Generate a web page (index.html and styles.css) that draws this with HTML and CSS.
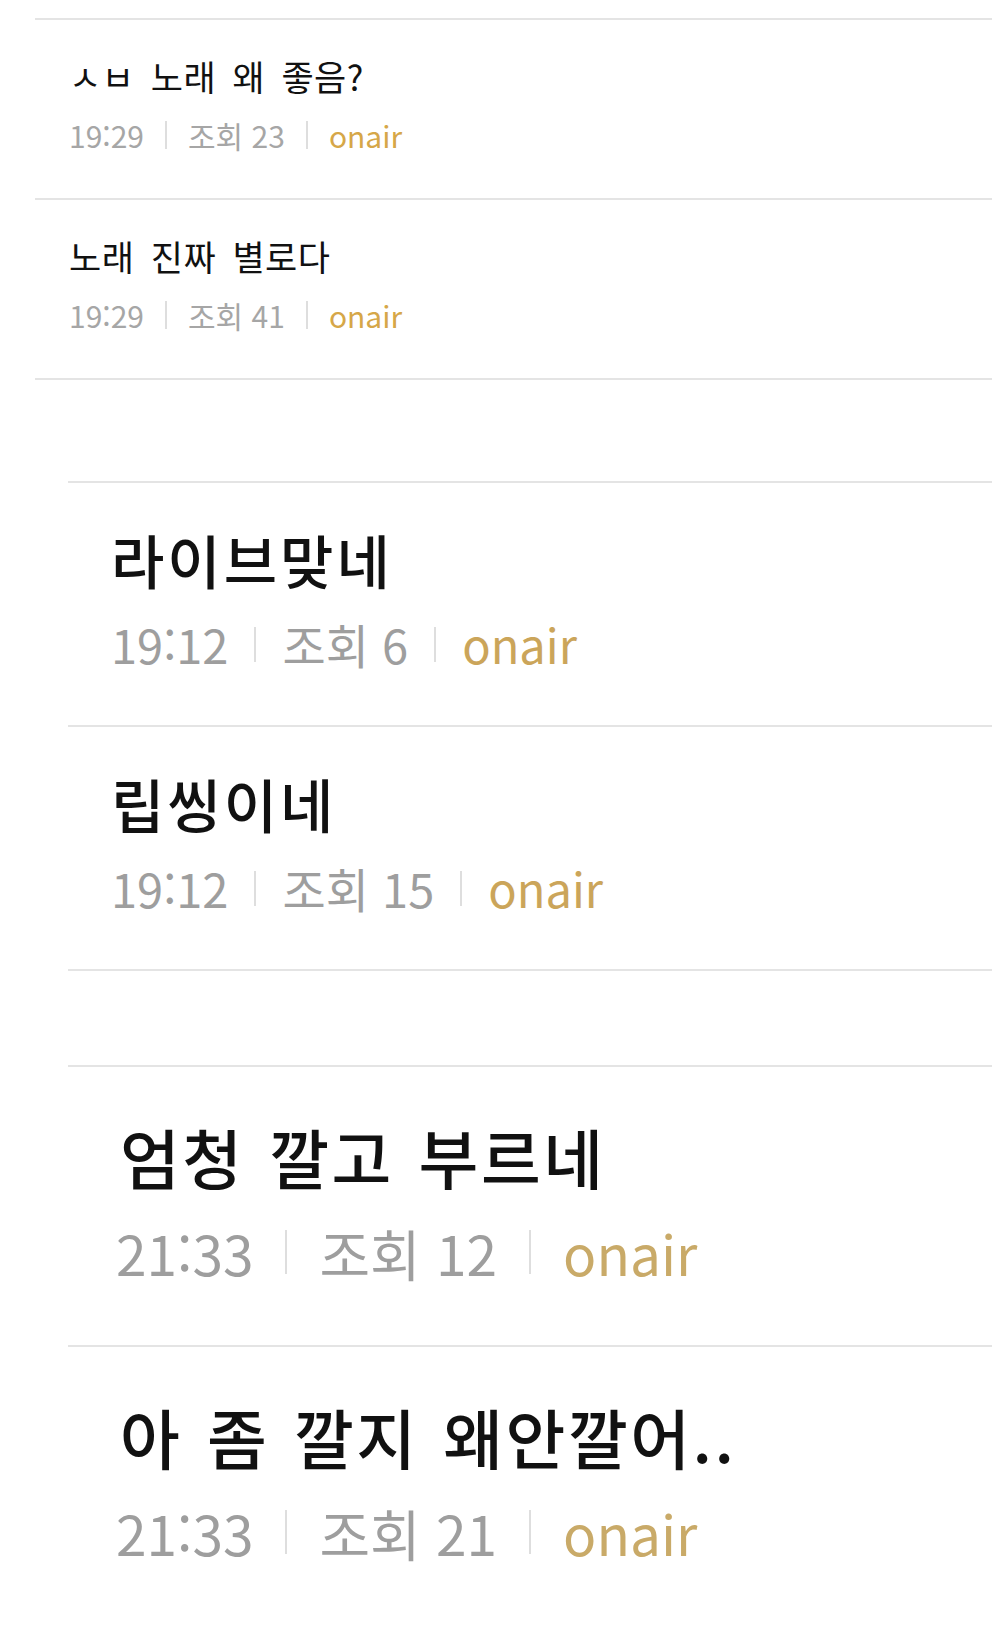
FILE: index.html
```html
<!DOCTYPE html>
<html lang="ko">
<head>
<meta charset="utf-8">
<title>게시판</title>
<link rel="stylesheet" href="styles.css">
</head>
<body>
<main class="page">
  <section class="board board--s1">
    <ul class="posts">
      <li class="post">
        <p class="post-title">ㅅㅂ 노래 왜 좋음?</p>
        <div class="post-meta"><span>19:29</span><i class="sep"></i><span>조회 23</span><i class="sep"></i><span class="onair">onair</span></div>
      </li>
      <li class="post">
        <p class="post-title">노래 진짜 별로다</p>
        <div class="post-meta"><span>19:29</span><i class="sep"></i><span>조회 41</span><i class="sep"></i><span class="onair">onair</span></div>
      </li>
    </ul>
  </section>

  <section class="board board--s2">
    <ul class="posts">
      <li class="post">
        <p class="post-title">라이브맞네</p>
        <div class="post-meta"><span>19:12</span><i class="sep"></i><span>조회 6</span><i class="sep"></i><span class="onair">onair</span></div>
      </li>
      <li class="post">
        <p class="post-title">립씽이네</p>
        <div class="post-meta"><span>19:12</span><i class="sep"></i><span>조회 15</span><i class="sep"></i><span class="onair">onair</span></div>
      </li>
    </ul>
  </section>

  <section class="board board--s3">
    <ul class="posts">
      <li class="post">
        <p class="post-title">엄청 깔고 부르네</p>
        <div class="post-meta"><span>21:33</span><i class="sep"></i><span>조회 12</span><i class="sep"></i><span class="onair">onair</span></div>
      </li>
      <li class="post">
        <p class="post-title">아 좀 깔지 왜안깔어..</p>
        <div class="post-meta"><span>21:33</span><i class="sep"></i><span>조회 21</span><i class="sep"></i><span class="onair">onair</span></div>
      </li>
    </ul>
  </section>
</main>
</body>
</html>
```

FILE: styles.css
```css
* { box-sizing: border-box; }

html, body {
  margin: 0;
  padding: 0;
  background: #ffffff;
}

body {
  font-family: "Noto Sans CJK KR", "Noto Sans", sans-serif;
  color: #111111;
}

.page {
  display: flex;
  flex-direction: column;
  width: 992px;
  min-height: 1643px;
  overflow: hidden;
}

.posts {
  list-style: none;
  margin: 0;
  padding: 0;
}

.post {
  border-top: 2px solid #e4e4e4;
  display: flex;
  flex-direction: column;
  align-items: flex-start;
}

.post-title {
  margin: 0;
  white-space: nowrap;
  color: #111111;
  font-weight: 500;
}

.post-meta {
  display: flex;
  align-items: center;
  white-space: nowrap;
  color: #9e9e9e;
}

.sep {
  display: block;
  width: 2px;
  background: #dedede;
}

.onair {
  color: #cba55a;
}

/* ---- first capture (small) ---- */
.board--s1 {
  margin-left: 35px;
  padding-top: 18px;
}
.board--s1 .posts {
  border-bottom: 2px solid #e4e4e4;
}
.board--s1 .post {
  height: 180px;
  padding: 35px 0 0 34px;
}
.board--s1 .post-title {
  font-size: 35px;
  line-height: 42px;
  font-weight: 400;
  word-spacing: 6px;
  letter-spacing: 0.5px;
}
.board--s1 .post-meta {
  margin-top: 18px;
  font-size: 30px;
  line-height: 40px;
  gap: 21px;
  color: #a6a6a6;
}
.board--s1 .sep {
  height: 28px;
}
.board--s1 .onair {
  color: #d6a748;
}

/* ---- second capture (medium) ---- */
.board--s2 {
  margin-left: 68px;
  margin-top: 101px;
}
.board--s2 .posts {
  border-bottom: 2px solid #e4e4e4;
}
.board--s2 .post {
  height: 244px;
  padding: 41px 0 0 43px;
}
.board--s2 .post-title {
  font-size: 58px;
  line-height: 70px;
  letter-spacing: 3px;
}
.board--s2 .post-meta {
  margin-top: 22px;
  font-size: 47px;
  line-height: 56px;
  gap: 26px;
}
.board--s2 .sep {
  height: 35px;
}

/* ---- third capture (large) ---- */
.board--s3 {
  margin-left: 68px;
  margin-top: 94px;
}
.board--s3 .post {
  height: 280px;
  padding: 50px 0 0 48px;
}
.board--s3 .post-title {
  margin-left: 4px;
  font-size: 65px;
  line-height: 78px;
  letter-spacing: 2.5px;
  word-spacing: 4px;
}
.board--s3 .post-meta {
  margin-top: 24px;
  font-size: 55px;
  line-height: 66px;
  gap: 32px;
}
.board--s3 .sep {
  height: 44px;
}
.board--s3 .onair {
  color: #c9aa68;
}
```
